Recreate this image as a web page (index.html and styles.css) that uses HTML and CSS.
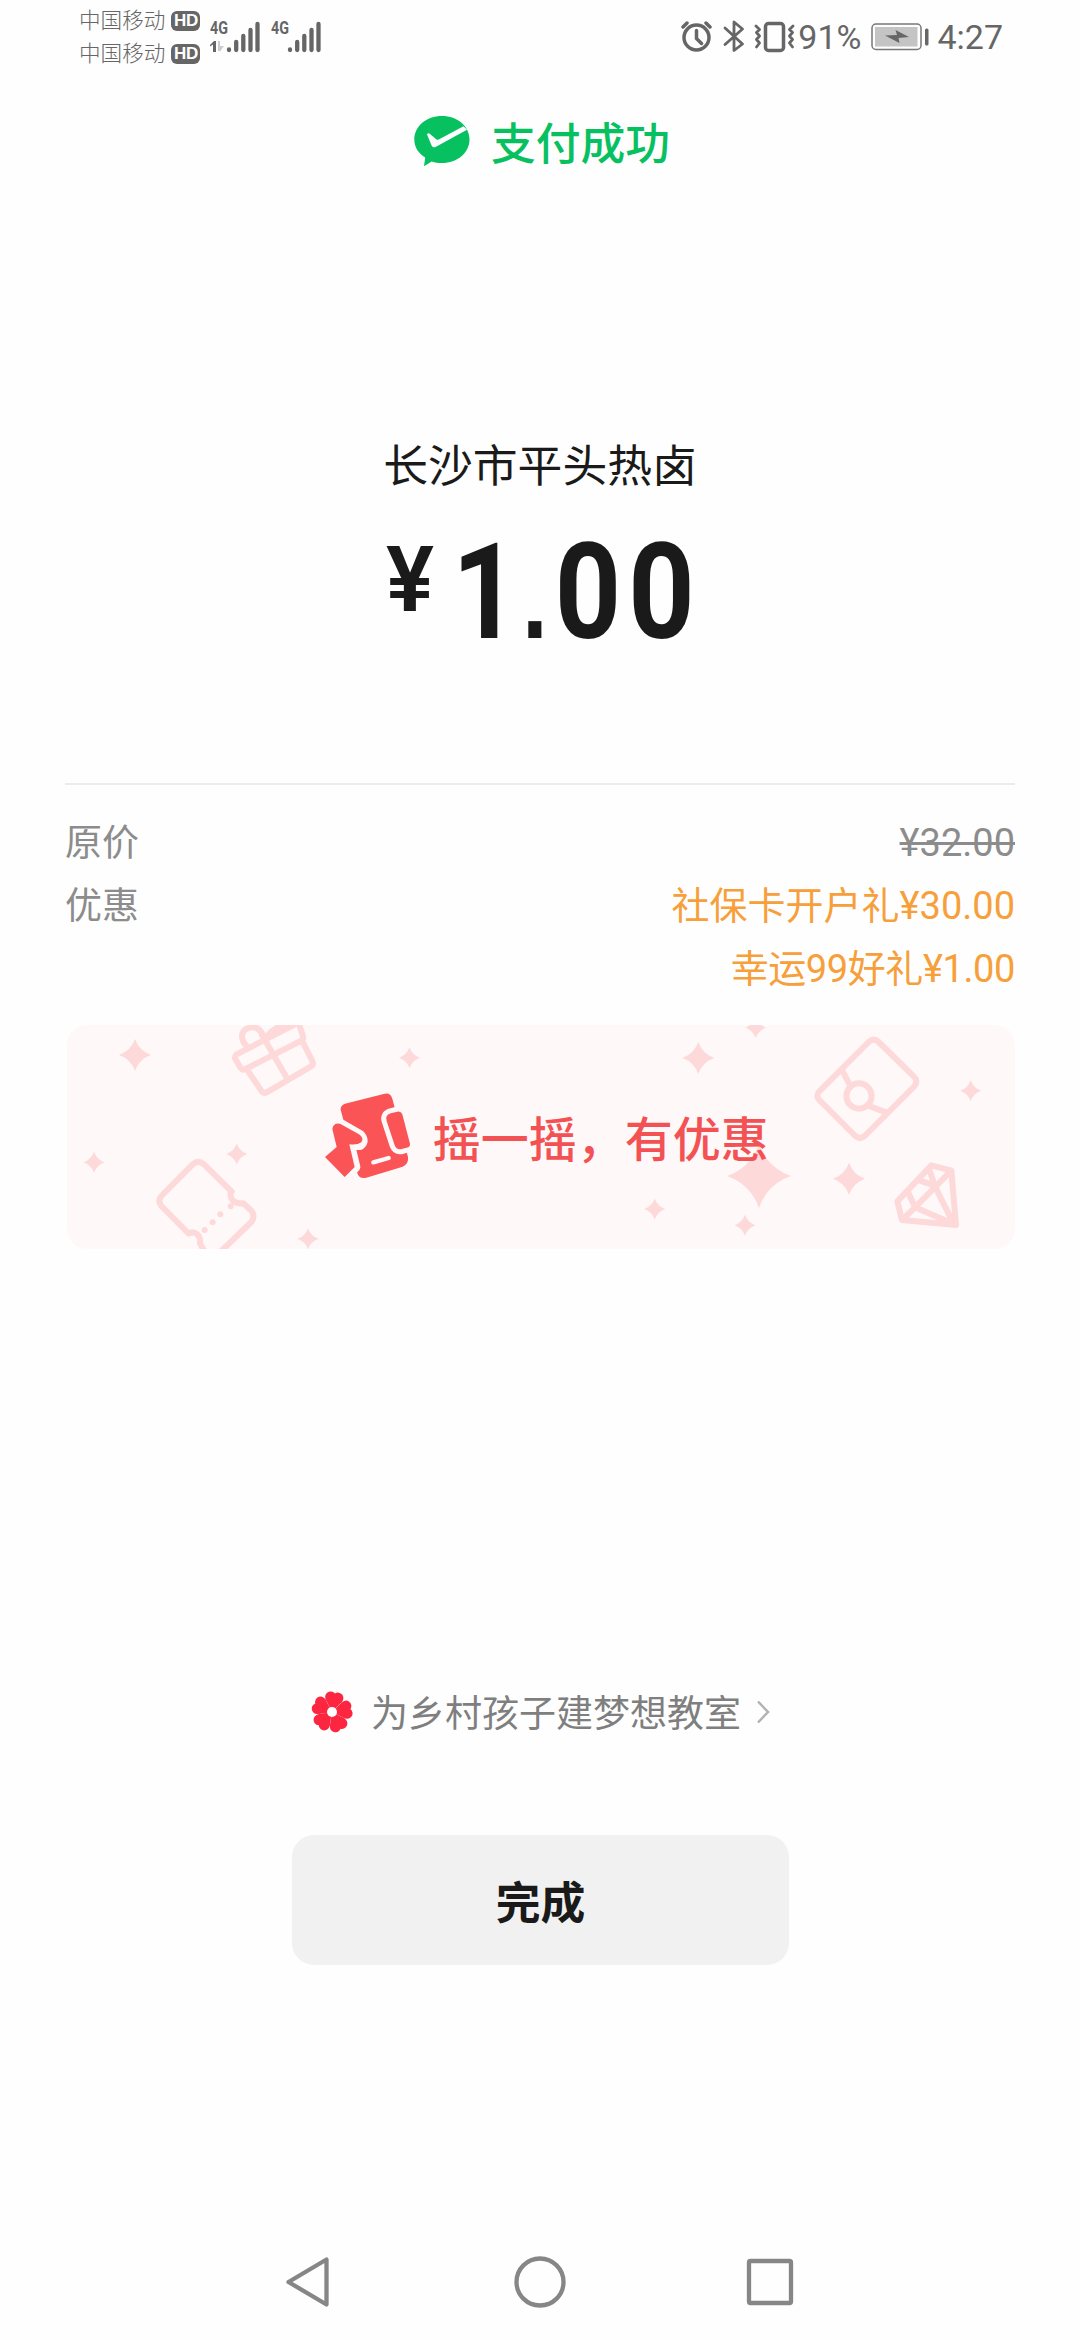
FILE: index.html
```html
<!DOCTYPE html>
<html lang="zh-CN">
<head>
<meta charset="utf-8">
<title>支付成功</title>
<link rel="stylesheet" href="styles.css">
</head>
<body>
<div class="screen">
  <header class="status">
    <div class="carriers">
      <div class="carrier"><span>中国移动</span><b class="hd">HD</b></div>
      <div class="carrier"><span>中国移动</span><b class="hd">HD</b></div>
    </div>
    <svg class="signals" viewBox="0 0 115 40" width="115" height="40">
      <g class="net">
        <text x="0" y="18" textLength="18" lengthAdjust="spacingAndGlyphs">4G</text>
        <text x="61" y="18" textLength="18" lengthAdjust="spacingAndGlyphs">4G</text>
      </g>
      <path class="ink" d="M0 29l4-4h2v11H3v-7.500l-3 2z"/>
      <path class="faint" d="M8 25h2v5h4l-3.500 5H8z"/>
      <g class="bars">
        <path d="M19 33.500v.5M26.200 26v8M33.300 20v14M40.500 14v20M47.500 8v26"/>
        <path d="M80 33.500v.5M87.200 26v8M94.300 20v14M101.500 14v20M108.500 8v26"/>
      </g>
    </svg>
    <div class="spacer"></div>
    <svg class="sys" viewBox="0 0 114 34" width="114" height="34">
      <g class="line">
        <circle cx="15.500" cy="18.500" r="12.500"/>
        <path d="M15.500 11.500v8l5 5M2 8l4-4M29 8l-4-4"/>
        <path class="thin" d="M44 9l17.500 16L53 31.500V3l8.500 7L44 25.500"/>
        <rect x="84.500" y="4.500" width="18" height="27" rx="3"/>
        <path class="thin" d="M75 7l3.500 3.500-3 3 3 3.500-3 3.500 3 3.500-3 4M112 7l-3.500 3.500 3 3-3 3.500 3 3.500-3 3.500 3 4"/>
      </g>
    </svg>
    <span class="percent">91%</span>
    <svg class="battery" viewBox="0 0 58 28" width="58" height="28">
      <rect class="shell" x="1" y="1" width="49" height="25.500" rx="4"/>
      <rect class="charge" x="4" y="4" width="42.500" height="19.500"/>
      <path class="ink" d="M14 12.500l12-.5-1.500-5L38 14l-10.500 1 1 5z"/>
      <rect class="ink" x="54" y="5.500" width="3.500" height="17" rx="1.500"/>
    </svg>
    <span class="clock">4:27</span>
  </header>

  <div class="result">
    <svg viewBox="0 0 56 51" width="56" height="51">
      <path class="green" d="M28 0C43.500 0 55.500 10.300 55.500 23.500S43.500 47 28 47c-3.700 0-7-.4-10.300-1.500L10 50.200l1.200-8.700C4 37 .3 31 .3 23.500.3 10.300 12.400 0 28 0z"/>
      <path class="check" d="M13 18.500c.7-1.500 2-1.500 3-.6l6.200 5.300c1 .7 2 .6 3 .1L49.500 10.200 53 13.700 22 30.700c-2 1-3.500.6-4.400-1.200z"/>
    </svg>
    <span>支付成功</span>
  </div>

  <main>
    <div class="shop">长沙市平头热卤</div>
    <div class="amount"><span class="yen">¥</span><span class="figure">1<span class="point">.</span>00</span></div>
    <div class="details">
      <div class="row"><span>原价</span><s>¥32.00</s></div>
      <div class="row"><span>优惠</span><em>社保卡开户礼¥30.00</em></div>
      <div class="row"><span></span><em class="snug">幸运99好礼¥1.00</em></div>
    </div>
    <div class="banner">
      <svg class="decor" viewBox="67 1025 948 224" width="948" height="224">
        <defs><path id="spark" d="M0-1Q.26-.26 1 0Q.26.260 0 1Q-.26.260-1 0Q-.26-.26 0-1z"/></defs>
        <g class="pink">
          <use href="#spark" transform="translate(135 1055) scale(16)"/>
          <use href="#spark" transform="translate(409.500 1057.700) scale(10.500)"/>
          <use href="#spark" transform="translate(94 1162.300) scale(10.500)"/>
          <use href="#spark" transform="translate(236.700 1154) scale(10.500)"/>
          <use href="#spark" transform="translate(308 1238.700) scale(10.500)"/>
          <use href="#spark" transform="translate(698.300 1058) scale(16)"/>
          <use href="#spark" transform="translate(755.700 1027.500) scale(10.500)"/>
          <use href="#spark" transform="translate(970.700 1090.700) scale(10.500)"/>
          <use href="#spark" transform="translate(759 1176) scale(32)"/>
          <use href="#spark" transform="translate(849 1178.700) scale(16)"/>
          <use href="#spark" transform="translate(654.700 1209) scale(10.500)"/>
          <use href="#spark" transform="translate(745 1225.300) scale(10.500)"/>
        </g>
        <g class="outline" transform="translate(60 1010) scale(.33333)">
          <path d="M715 38L530 133Q522 139 526 147L542 174Q548 182 557 177L722 93Q732 87 729 78L718 45M566 186L604 242Q610 252 620 247L752 170Q762 164 757 153L726 92M606 75L682 206M612 85Q602 48 572 52Q545 58 546 82Q549 98 560 108M625 75Q650 45 690 42"/>
          <path d="M515 545L432 463Q415 448 398 463L304 558Q292 572 304 588L386 671Q398 662 412 673Q422 684 420 700L432 722M513 543Q508 562 520 573Q532 582 550 580L572 600Q588 616 574 636L485 722"/>
          <path class="dots" d="M512 589v.1M481 613v.1M458 637v.1M434 660v.1"/>
        </g>
        <g class="outline" transform="translate(640 1010) scale(.33333)">
          <path d="M686 96Q701 82 716 96L822 200Q836 214 822 230L676 376Q660 392 644 376L540 272Q524 258 540 242zM607 182L630 226M688 288L740 308"/>
          <circle cx="657" cy="258" r="38"/>
          <path d="M874 466L934 482 948 645 786 630 772 574zM934 482L825 592M804 546L825 592 786 630M825 592L948 645M840 512L884 527 940 640M884 527L868 478"/>
        </g>
      </svg>
      <svg class="shake" viewBox="790 245 260 262" width="86.670" height="87.330">
        <path class="red" d="M841 302Q836 287 853 280L972 250Q990 247 995 265L1042 440Q1045 460 1026 469L917 502Q895 507 890 488z"/>
        <path class="cut" d="M815 356Q818 336 838 340L898 374Q914 392 898 404H868L884 470 852 500 793 440 828 410z"/>
        <path class="red" d="M815 356Q818 336 838 340L895 372Q912 384 902 396Q890 405 866 402L882 470 852 500 793 440 828 410z"/>
        <path class="cut" d="M978 332Q972 315 990 309L1010 304Q1021 302 1025 312L1048 400Q1049 410 1038 412L1020 417Q1007 418 1002 405z"/>
        <path class="red" d="M978 332Q972 315 990 309L1010 304Q1021 302 1025 312L1048 400Q1049 410 1038 412L1020 417Q1007 418 1002 405z"/>
        <path class="dash" d="M938 456L984 443"/>
      </svg>
      <span class="slogan">摇一摇，有优惠</span>
    </div>
    <div class="charity">
      <svg viewBox="-63 -63 126 126" width="42" height="42">
        <defs><g id="petal"><path d="M0 0L-25-35H25z"/><circle cx="-11" cy="-44" r="16.500"/><circle cx="11" cy="-44" r="16.500"/></g></defs>
        <g class="flower" transform="rotate(9)">
          <use href="#petal"/><use href="#petal" transform="rotate(72)"/><use href="#petal" transform="rotate(144)"/><use href="#petal" transform="rotate(216)"/><use href="#petal" transform="rotate(288)"/>
        </g>
        <circle class="eye" r="15"/>
      </svg>
      <span>为乡村孩子建梦想教室</span>
      <svg class="chevron" viewBox="0 0 14 24" width="14" height="24"><path d="M2 1.500L12 12 2 22.500"/></svg>
    </div>
    <button class="done">完成</button>
  </main>

  <nav class="keys">
    <svg viewBox="0 0 52 52" width="52" height="52"><path d="M42.500 3.500v45L4.500 26z"/></svg>
    <svg viewBox="0 0 52 52" width="52" height="52"><circle cx="26" cy="26" r="23.500"/></svg>
    <svg viewBox="0 0 52 52" width="52" height="52"><rect x="5" y="5" width="42" height="42" rx="1.500"/></svg>
  </nav>
</div>
</body>
</html>
```
FILE: styles.css
```css
* { box-sizing: border-box; }
body {
  margin: 0;
  background: #fefefe;
  color: #1a1a1a;
  font-family: Roboto, "Noto Sans CJK SC", sans-serif;
}
svg { display: block; flex: none; }
.screen {
  width: 1080px;
  height: 2340px;
  display: flex;
  flex-direction: column;
  overflow: hidden;
}

.status {
  height: 80px;
  padding: 4px 77px 0 79px;
  display: flex;
  align-items: flex-start;
  color: #666;
}
.carriers { display: flex; flex-direction: column; }
.carrier {
  height: 33px;
  display: flex;
  align-items: center;
  gap: 6px;
  font-size: 21.600px;
  font-weight: 300;
  line-height: 33px;
}
.hd {
  width: 29px;
  height: 20px;
  border-radius: 6px;
  background: #666;
  color: #fff;
  font: 700 17px/20px "Liberation Sans", sans-serif;
  letter-spacing: -.5px;
  text-align: center;
}
.signals { margin: 12px 0 0 10px; }
.net text { font: 700 18px Roboto, sans-serif; fill: #666; }
.ink { fill: #666; }
.faint { fill: #ccc; }
.bars path { fill: none; stroke: #666; stroke-width: 4.300; stroke-linecap: round; }
.spacer { flex: 1; }
.sys { margin-top: 15px; }
.line { fill: none; stroke: #666; stroke-width: 3.500; stroke-linejoin: round; stroke-linecap: round; }
.line .thin { stroke-width: 2.800; }
.percent, .clock { font-size: 34px; line-height: 40px; margin-top: 13px; }
.percent { margin-left: 3px; }
.battery { margin: 19px 0 0 10px; }
.clock { margin-left: 8px; }
.shell { fill: #fefefe; stroke: #777; stroke-width: 1.500; }
.charge { fill: #c4c4c4; }

.result {
  height: 128px;
  padding: 36px 0 0 4px;
  display: flex;
  justify-content: center;
  gap: 21px;
  color: #07c160;
  font-size: 44.800px;
  font-weight: 500;
  line-height: 57px;
}
.green { fill: #07c160; }
.check { fill: #fefefe; }

main {
  flex: 1;
  padding: 0 65px;
  display: flex;
  flex-direction: column;
  align-items: center;
}
.shop { margin-top: 229px; font-size: 44.800px; line-height: 60px; }
.amount {
  align-self: stretch;
  height: 286px;
  display: flex;
  align-items: flex-start;
  padding: 17px 0 0 321px;
  font-weight: 700;
}
.yen { width: 66px; font-size: 90px; font-weight: 600; line-height: 90px; margin-top: 22px; }
.figure {
  font-size: 133px;
  line-height: 158px;
  letter-spacing: 8px;
  white-space: nowrap;
  transform: scaleX(.87);
  transform-origin: left;
}
.point {
  margin-left: -11px;
  font: 400 158px/1px "Liberation Sans", sans-serif;
  letter-spacing: 1px;
}
.details {
  align-self: stretch;
  height: 242px;
  border-top: 2px solid #ececec;
  padding-top: 27px;
}
.row {
  height: 63px;
  display: flex;
  justify-content: space-between;
  color: #8c8c8c;
  font-size: 37px;
  line-height: 63px;
}
.row s, .row em { font-size: 38px; font-style: normal; }
.row em { color: #f79f3a; }
.row .snug { letter-spacing: -.4px; }

.banner {
  position: relative;
  align-self: flex-end;
  width: 948px;
  height: 224px;
  border-radius: 20px;
  background: #fff8f8;
  overflow: hidden;
  display: flex;
  align-items: center;
  padding-left: 257px;
  gap: 22px;
}
.decor { position: absolute; left: 0; top: 0; }
.pink { fill: #fdd9da; }
.outline { fill: none; stroke: #fdd9da; stroke-width: 18; stroke-linejoin: round; stroke-linecap: round; }
.red { fill: #fa5457; }
.cut { fill: #fff8f8; stroke: #fff8f8; stroke-width: 30; stroke-linejoin: round; }
.dash { stroke: #fff8f8; stroke-width: 13; stroke-linecap: round; }
.shake { position: relative; margin-top: -2px; }
.slogan {
  position: relative;
  padding-top: 7px;
  color: #f35254;
  font-size: 48px;
  font-weight: 500;
  line-height: 60px;
}

.charity {
  margin: 434px 0 0 1px;
  height: 60px;
  display: flex;
  align-items: center;
  color: #7f7f7f;
  font-size: 37px;
  line-height: 60px;
  gap: 18px;
}
.charity svg { margin-top: -3px; }
.charity span { padding-top: 3px; }
.charity .chevron { margin-left: -3px; }
.flower { fill: #fc2641; }
.eye { fill: #fefefe; }
.chevron path { fill: none; stroke: #b2b2b2; stroke-width: 2.500; }
.done {
  width: 497px;
  height: 130px;
  margin: 92px 0 0 1px;
  padding: 0;
  border: 0;
  border-radius: 22px;
  background: #f1f1f1;
  color: #1a1a1a;
  font: 700 44.800px/130px "Noto Sans CJK SC", sans-serif;
}

.keys {
  height: 84px;
  display: flex;
  justify-content: center;
  gap: 178px;
}
.keys path, .keys circle, .keys rect { fill: none; stroke: #868686; stroke-width: 4.300; stroke-linejoin: round; }
```
